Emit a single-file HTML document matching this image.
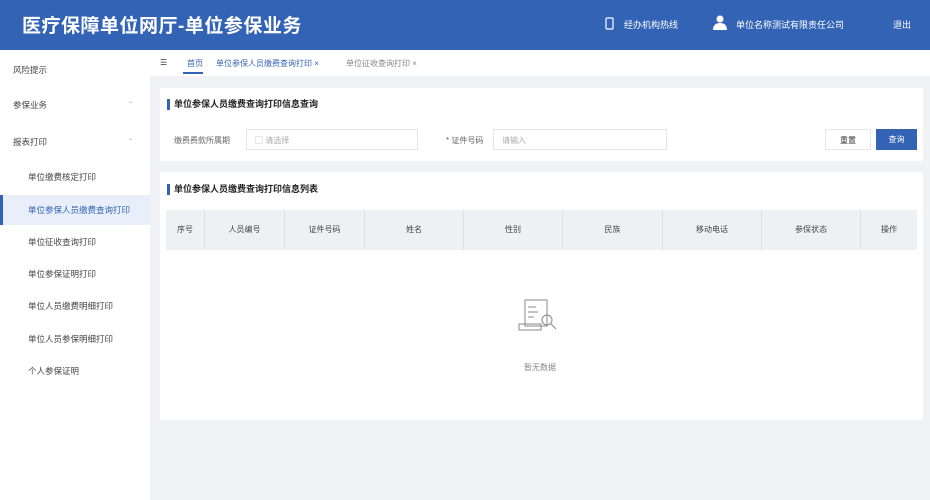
<!DOCTYPE html><html><head><meta charset="utf-8"><style>
*{margin:0;padding:0;box-sizing:border-box}
body{width:930px;height:500px;overflow:hidden;background:#f0f2f5;font-family:"Liberation Sans","Noto Sans CJK SC",sans-serif;font-size:9px;color:#333;position:relative}
.hd{position:absolute;left:0;top:0;width:930px;height:50px;background:#3363b5;color:#fff}
.hd .t{position:absolute;left:22px;top:11px;font-size:19px;letter-spacing:.5px;font-weight:bold}
.hd span{position:absolute;top:18px;font-size:9px}
.sb{position:absolute;left:0;top:50px;width:150px;height:450px;background:#fff}
.sb div{position:absolute;left:0;width:150px;height:30px;line-height:30px;padding-left:13px;font-size:8.5px;color:#444}
.sb div.s{padding-left:28px}
.sb div.a{background:#e8effa;color:#3363b5;border-left:3px solid #3363b5}
.sb i{position:absolute;right:18px;font-style:normal;color:#999}
.tb{position:absolute;left:150px;top:50px;width:780px;height:26px;background:#fff}
.tb span{position:absolute;top:8px;font-size:8px}
.card{position:absolute;left:160px;background:#fff;width:763px}
.ttl{position:absolute;left:7px;font-size:9px;border-left:3px solid #3363b5;padding-left:4px;line-height:11px;color:#222;font-weight:bold}
.inp{position:absolute;height:21px;border:1px solid #e3e6eb;background:#fff;font-size:8px;color:#aaa;padding:5px 8px}
.th{position:absolute;left:6px;top:38px;width:751px;height:40px;background:#eef0f4;display:flex}
.th div{border-right:1px solid #dcdfe6;text-align:center;line-height:40px;font-size:8px;color:#444}
</style></head><body>
<div class="hd"><div class="t">医疗保障单位网厅-单位参保业务</div>
<svg style="position:absolute;left:605px;top:17px" width="9" height="13" viewBox="0 0 9 13" fill="none" stroke="#fff" stroke-width="1.2"><rect x="1" y="1" width="7" height="11" rx="1"/></svg>
<span style="left:624px">经办机构热线</span>
<svg style="position:absolute;left:713px;top:15px" width="14" height="15" viewBox="0 0 14 15" fill="#fff"><circle cx="7" cy="4" r="3.5"/><path d="M0 15c0-5 3-7 7-7s7 2 7 7z"/></svg>
<span style="left:736px">单位名称测试有限责任公司</span><span style="left:893px">退出</span></div>
<div class="sb">
<div style="top:5px">风险提示</div>
<div style="top:40px">参保业务<i>ˇ</i></div>
<div style="top:77px">报表打印<i>ˇ</i></div>
<div class="s" style="top:112px">单位缴费核定打印</div>
<div class="s a" style="top:145px;padding-left:25px">单位参保人员缴费查询打印</div>
<div class="s" style="top:177px">单位征收查询打印</div>
<div class="s" style="top:209px">单位参保证明打印</div>
<div class="s" style="top:241px">单位人员缴费明细打印</div>
<div class="s" style="top:274px">单位人员参保明细打印</div>
<div class="s" style="top:306px">个人参保证明</div>
</div>
<div class="tb"><span style="left:10px;color:#333">☰</span><span style="left:37px;color:#3363b5">首页</span><div style="position:absolute;left:33px;top:22px;width:20px;height:2px;background:#3363b5"></div>
<span style="left:66px;color:#3363b5">单位参保人员缴费查询打印 ×</span><span style="left:196px;color:#888">单位征收查询打印 ×</span></div>
<div class="card" style="top:88px;height:73px">
<div class="ttl" style="top:11px">单位参保人员缴费查询打印信息查询</div>
<div style="position:absolute;left:14px;top:47px;font-size:8px;color:#666">缴费费款所属期</div>
<div class="inp" style="left:86px;top:41px;width:172px">▢ 请选择</div>
<div style="position:absolute;left:286px;top:47px;font-size:8px;color:#666">* 证件号码</div>
<div class="inp" style="left:333px;top:41px;width:174px">请输入</div>
<div class="inp" style="left:665px;top:41px;width:46px;color:#333;text-align:center;border:1px solid #e3e6eb">重置</div>
<div style="position:absolute;left:716px;top:41px;width:41px;height:21px;background:#3363b5;color:#fff;font-size:8px;text-align:center;line-height:21px">查询</div>
</div>
<div class="card" style="top:172px;height:248px">
<div class="ttl" style="top:12px">单位参保人员缴费查询打印信息列表</div>
<div class="th"><div style="width:39px">序号</div><div style="width:80px">人员编号</div><div style="width:80px">证件号码</div><div style="width:99px">姓名</div><div style="width:99px">性别</div><div style="width:100px">民族</div><div style="width:99px">移动电话</div><div style="width:99px">参保状态</div><div style="width:56px;border:0">操作</div></div>
<svg style="position:absolute;left:355px;top:118px" width="50" height="50" viewBox="0 0 50 50" fill="none" stroke="#888" stroke-width="1"><rect x="10" y="10" width="22" height="26"/><path d="M13 17h8M13 22h10M13 27h6"/><path d="M4 34h22v6H4z"/><circle cx="32" cy="30" r="5"/><path d="M36 34l5 5"/></svg>
<div style="position:absolute;left:364px;top:190px;font-size:8px;color:#888">暂无数据</div>
</div>
</body></html>
